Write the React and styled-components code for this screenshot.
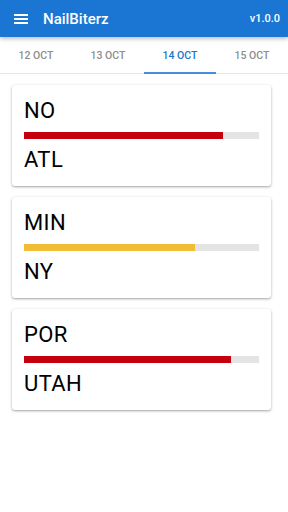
import React, { useState } from 'react'
import styled, { createGlobalStyle } from 'styled-components'

const GlobalStyle = createGlobalStyle`
  html, body {
    margin: 0;
    padding: 0;
    background: #ffffff;
    font-family: Roboto, "Liberation Sans", sans-serif;
  }
`

const games = [
  { home: 'NO', away: 'ATL', value: 0.847, color: '#c4000e' },
  { home: 'MIN', away: 'NY', value: 0.728, color: '#f0bd35' },
  { home: 'POR', away: 'UTAH', value: 0.88, color: '#c4000e' },
]

const days = ['12 OCT', '13 OCT', '14 OCT', '15 OCT']

function MenuIcon() {
  return (
    <svg width="16" height="12" viewBox="0 0 16 12">
      <rect x="1" y="1" width="14" height="2" fill="#fff" />
      <rect x="1" y="5" width="14" height="2" fill="#fff" />
      <rect x="1" y="9" width="14" height="2" fill="#fff" />
    </svg>
  )
}

function GameCard(props) {
  return (
    <Card>
      <Team>{props.home}</Team>
      <Track>
        <Fill color={props.color} style={{ width: `${props.value * 100}%` }} />
      </Track>
      <Team>{props.away}</Team>
    </Card>
  )
}

export default function App() {
  const [active, setActive] = useState(2)
  return (
    <Page>
      <GlobalStyle />
      <AppBar>
        <MenuButton><MenuIcon /></MenuButton>
        <Title>NailBiterz</Title>
        <Version>v1.0.0</Version>
      </AppBar>
      <Tabs>
        {days.map((d, i) => (
          <Tab key={d} active={i === active} onClick={() => setActive(i)}>{d}</Tab>
        ))}
      </Tabs>
      <CardList>
        {games.map(g => (
          <GameCard key={g.home} {...g} />
        ))}
      </CardList>
    </Page>
  )
}

const Page = styled.div`
  width: 288px;
  min-height: 512px;
  background: #fff;
`

const AppBar = styled.header`
  height: 37px;
  background: #1a76d2;
  display: flex;
  align-items: center;
  padding: 0 8px 0 13px;
  box-shadow: 0 2px 4px rgba(0, 0, 0, 0.25);
  position: relative;
  z-index: 2;
`

const MenuButton = styled.div`
  width: 16px;
  height: 12px;
  display: flex;
  margin-right: 14px;
  margin-top: 1px;
`

const Title = styled.div`
  flex: 1;
  color: #fff;
  font-size: 15px;
  font-weight: 500;
`

const Version = styled.div`
  color: #fff;
  font-size: 11px;
  font-weight: 500;
`

const Tabs = styled.nav`
  display: grid;
  grid-template-columns: repeat(4, 1fr);
  height: 36px;
  border-bottom: 1px solid #e6e6e6;
`

const Tab = styled.div`
  display: flex;
  align-items: center;
  justify-content: center;
  font-size: 10.5px;
  font-weight: 500;
  color: ${p => (p.active ? '#1a76d2' : '#8e8e8e')};
  border-bottom: 2px solid ${p => (p.active ? '#4a8fd6' : 'transparent')};
  margin-bottom: -1px;
  padding-top: 1px;
`

const CardList = styled.div`
  display: flex;
  flex-direction: column;
  gap: 11px;
  padding: 11px 17px 0 12px;
`

const Card = styled.div`
  height: 101px;
  box-sizing: border-box;
  background: #fff;
  border-radius: 3px;
  box-shadow: 0 1px 3px rgba(0, 0, 0, 0.3), 0 1px 1px rgba(0, 0, 0, 0.08);
  padding: 11px 12px 0 12px;
  display: flex;
  flex-direction: column;
`

const Team = styled.div`
  font-size: 22px;
  line-height: 30px;
  color: #000;
  font-weight: 400;
  letter-spacing: 0.4px;
`

const Track = styled.div`
  height: 7px;
  background: #e4e4e4;
  margin: 6px 0 6px 0;
  display: flex;
`

const Fill = styled.div`
  height: 100%;
  background: ${p => p.color};
`
